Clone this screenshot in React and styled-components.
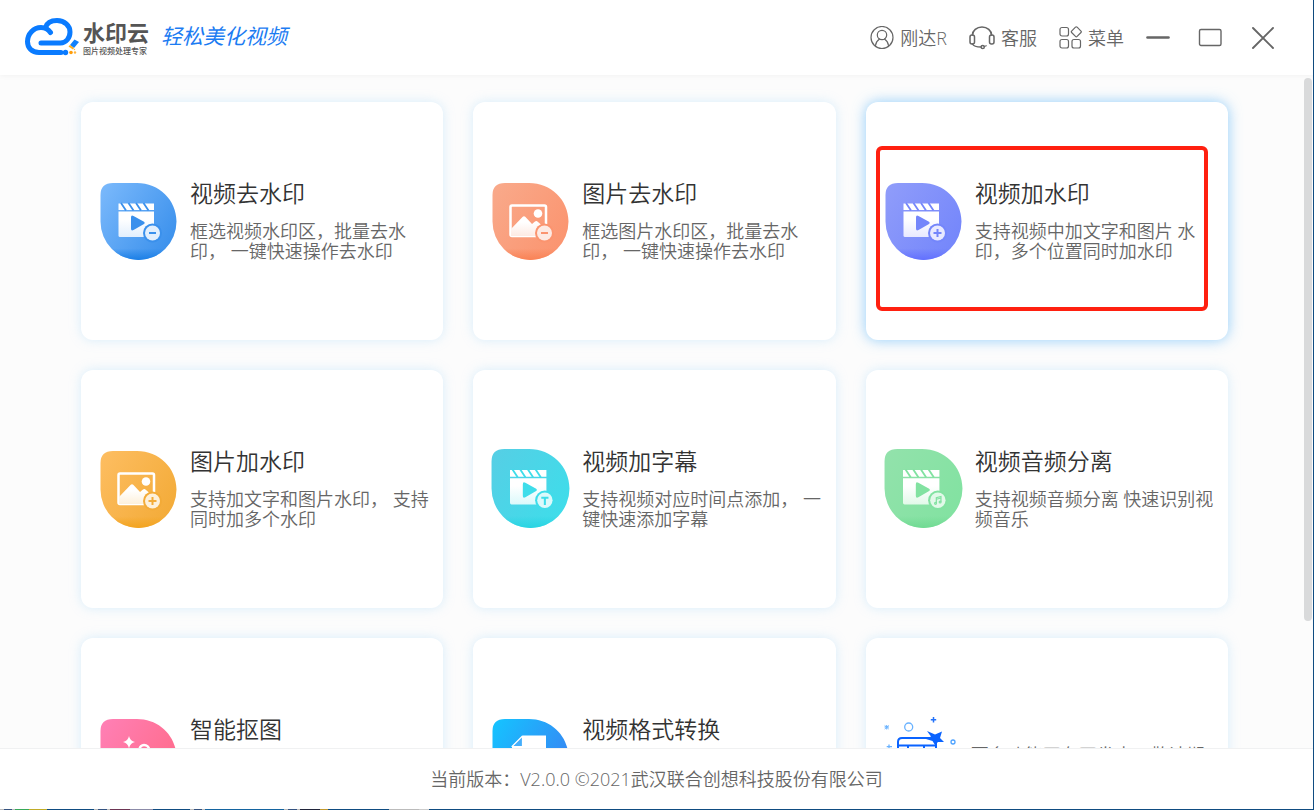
import React from 'react';
import styled, { createGlobalStyle, css } from 'styled-components';

const GlobalStyle = createGlobalStyle`
  *, *::before, *::after { box-sizing: border-box; }
  body {
    margin: 0;
    background: #fff;
    color: #666;
    font-family: "Open Sans", "Noto Sans CJK SC", sans-serif;
    font-weight: 350;
    font-size: 18px;
  }
`;

const Shell = styled.div`
  display: flex;
  flex-direction: column;
  height: 100vh;
  border-right: 1px solid #0f4c81;
`;

const Header = styled.header`
  position: relative;
  z-index: 1;
  flex: none;
  display: flex;
  align-items: center;
  justify-content: space-between;
  height: 75px;
  padding: 0 39px 0 24px;
  background: #fff;
  box-shadow: 0 0 6px rgba(0, 0, 0, 0.06);
`;

const Brand = styled.a`
  display: flex;
  align-items: center;
  color: #555;
  text-decoration: none;
  white-space: nowrap;
`;

const BrandNames = styled.span`
  display: flex;
  flex-direction: column;
  margin: 0 12px 0 4px;
`;

const BrandName = styled.span`
  font-size: 22px;
  line-height: 26px;
  font-weight: 700;
`;

const BrandSub = styled.span`
  font-size: 8px;
  line-height: 12px;
  font-weight: 500;
`;

const Slogan = styled.span`
  color: #1c7cf2;
  font-size: 21px;
  line-height: 34px;
  font-style: italic;
  font-weight: 400;
  padding-bottom: 4px;
`;

const Actions = styled.nav`
  display: flex;
  align-items: center;
  gap: 22px;
`;

const PlainButton = styled.button`
  display: flex;
  align-items: center;
  gap: 6px;
  padding: 0;
  border: 0;
  background: none;
  color: inherit;
  font: inherit;
  line-height: 24px;
  white-space: nowrap;
  cursor: pointer;
  svg { flex: none; display: block; }
`;

const WindowControls = styled.div`
  display: flex;
  gap: 28px;
`;

const Body = styled.div`
  flex: 1;
  min-height: 0;
  display: flex;
  background: #fcfcfc;
`;

const Main = styled.main`
  flex: 1;
  min-width: 0;
  overflow-y: auto;
  scrollbar-width: none;
`;

const Grid = styled.div`
  display: grid;
  grid-template-columns: repeat(3, minmax(0, 1fr));
  grid-auto-rows: 238px;
  gap: 30px;
  padding: 27px 76px 30px 81px;
`;

const Track = styled.div`
  flex: none;
  width: 9px;
  padding: 3px 1px 0 0;
`;

const Thumb = styled.div`
  height: 81%;
  border-radius: 4px;
  background: #d9dadb;
`;

const Card = styled.a`
  position: relative;
  display: flex;
  align-items: center;
  gap: ${(p) => (p.$plain ? '7px' : '12px')};
  padding-left: ${(p) => (p.$plain ? '18px' : '17px')};
  border-radius: 12px;
  background: #fff;
  color: inherit;
  text-decoration: none;
  box-shadow: 0 0 12px rgba(150, 208, 250, 0.35);
  ${(p) => p.$active && css`box-shadow: 0 0 14px rgba(100, 185, 250, 0.7);`}
`;

const CardText = styled.div`
  display: flex;
  flex-direction: column;
  gap: 13px;
  padding-bottom: 3px;
  white-space: pre;
`;

const Title = styled.h2`
  margin: 0;
  color: #333;
  font-size: 23px;
  line-height: 30px;
  font-weight: inherit;
`;

const Description = styled.p`
  margin: 0;
  min-height: 40px;
  font-size: 18px;
  line-height: 20px;
`;

const Notice = styled(Description)`
  padding-top: 18px;
`;

const Highlight = styled.span`
  position: absolute;
  inset: 44px 20px 29px 10px;
  border: 4px solid #ff2010;
  border-radius: 6px;
  pointer-events: none;
`;

const Footer = styled.footer`
  flex: none;
  display: flex;
  align-items: center;
  justify-content: center;
  height: 61px;
  padding-bottom: 2px;
  border-top: 1px solid #f0f1f2;
  background: #fff;
`;

const BottomEdge = styled.div`
  flex: none;
  height: 1px;
  background: linear-gradient(
    90deg,
    #bbb 0 4px, #345280 4px 12px, #bbb 12px 15px, #38a858 15px 29px, #c0ac28 29px 47px,
    #0f4c81 47px 94px, #bbb 94px 98px, #345280 98px 107px, #bbb 107px 110px, #6d3554 110px 130px,
    #8c8ba8 130px 153px, #0f4c81 153px 190px, #bbb 190px 194px, #345280 194px 202px, #bbb 202px 205px,
    #1464a0 205px 284px, #bbb 284px 288px, #345280 288px 297px, #bbb 297px 300px, #20243a 300px 320px,
    #c09830 320px 328px, #0f4c81 328px 389px, #bbb 389px 419px, #ccc 419px 429px, #0f4c81 429px
  );
`;

const CloudLogo = () => (
  <svg width="55" height="40" viewBox="-1 2 55 40" fill="none" aria-hidden="true">
    <path d="M36 36.500H14C6.500 36.500 2.500 31.500 2.500 25.500C2.500 18 8.500 11.500 16 11.500C20.500 11.500 23.500 13.500 25.500 16.500" stroke="#0a7bff" strokeWidth="5" strokeLinecap="round" />
    <path d="M20.500 11.500C22 6.500 27 4.500 32 4.500C39.500 4.500 45 9.500 45 16C45 22 41 27 35.500 27H16" stroke="#0a7bff" strokeWidth="5" strokeLinecap="round" strokeLinejoin="round" />
    <circle cx="40.500" cy="36.500" r="2.700" fill="#0a7bff" />
    <path d="M49.500 23.500L54 26L49 32L45 29Z" fill="#1180fb" />
    <path d="M45 29L49 32L48 33.500L43.500 30.500Z" fill="#ffae1a" />
    <circle cx="46" cy="36.500" r="1.800" fill="#ff9d0a" />
    <circle cx="50" cy="36.500" r="1.200" fill="#ffb53d" />
    <circle cx="49.500" cy="33.500" r="0.700" fill="#ffb53d" />
  </svg>
);

const LineIcon = ({ children, width = 24 }) => (
  <svg width={width} height="24" viewBox={`0 0 ${width} 24`} fill="none" stroke="#666" strokeWidth="1.200" strokeLinecap="round" strokeLinejoin="round" aria-hidden="true">
    {children}
  </svg>
);

const UserIcon = () => (
  <LineIcon>
    <circle cx="12" cy="11.500" r="11" />
    <circle cx="12" cy="9" r="4.700" />
    <path d="M5.500 19.500C5.800 16.500 7.300 14.500 9.500 13M14.500 13C16.700 14.500 18.200 16.500 18.500 19.500" />
  </LineIcon>
);

const HeadsetIcon = () => (
  <LineIcon width={26}>
    <path d="M3.500 9C3.500 4.500 7.700 1 13 1S22.500 4.500 22.500 9" strokeWidth="1.700" />
    <rect x="1" y="9" width="4.500" height="9" rx="2" strokeWidth="1.500" />
    <rect x="20.500" y="9" width="4.500" height="9" rx="2" strokeWidth="1.500" />
    <path d="M3.500 18C4.500 20 8 21 12 21" strokeWidth="1.500" />
    <circle cx="13.700" cy="21" r="1.600" strokeWidth="1.500" />
    <path d="M15.300 20.500L17.300 19.800" />
  </LineIcon>
);

const MenuIcon = () => (
  <LineIcon width={23}>
    <rect x="1" y="1.500" width="8.500" height="8.500" rx="2" />
    <rect x="1" y="13.500" width="8.500" height="8.500" rx="2" />
    <rect x="13" y="13.500" width="8.500" height="8.500" rx="2" />
    <path d="M16.500 1.200Q17.300 0.400 18.100 1.200L22 5.100Q22.700 5.800 22 6.500L18.100 10.400Q17.300 11.200 16.500 10.400L12.600 6.500Q11.900 5.800 12.600 5.100Z" />
  </LineIcon>
);

const tones = {
  blue: ['#79b8fb', '#3a90ec', '#1b7fe6', '#e2effd'],
  orange: ['#f9a98a', '#fb946f', '#f98255', '#fdeae3'],
  violet: ['#8f9cfa', '#7486fb', '#6270ff', '#e8e9ff'],
  amber: ['#fdbd60', '#f3ab38', '#f3a41f', '#fdf0da'],
  cyan: ['#55cfe5', '#3eddea', '#28d4e2', '#dbf9fb'],
  green: ['#92e2ab', '#82e2a1', '#70da92', '#e2f9e9'],
  pink: ['#ff7fb4', '#ff6a88', '#ff6a88', '#fff'],
  azure: ['#16c2ff', '#3a80f2', '#3a80f2', '#fff'],
};

const marks = {
  minus: <path d="M51 52H58" />,
  plus: <path d="M50.500 52H58.500M54.500 48V56" />,
  title: <path d="M51 49.500H58M54.500 49.500V56.500" />,
  music: (
    <g strokeWidth="1.200">
      <path d="M53 55V49.500L57.500 48.300V53.500M53 51L57.500 49.800" />
      <circle cx="52.200" cy="55" r="0.900" />
      <circle cx="56.700" cy="53.700" r="0.900" />
    </g>
  ),
};

const Clapper = ({ id, color }) => (
  <g>
    <path d="M20.500 22.500H56V29H20.500Z" fill="#fff" />
    <path d="M23 22L28 29.500M30.500 22L35.500 29.500M38 22L43 29.500M45.500 22L50.500 29.500" stroke={color} strokeWidth="1.800" />
    <path d="M20.500 30.500H56V56H22Q20.500 56 20.500 54.500Z" fill={`url(#${id}-glyph)`} />
    <path d="M33 36.500Q33 33.500 35.500 35L46 40.800Q47.700 42 46 43L35.500 49Q33 50.300 33 47.500Z" fill={color} />
  </g>
);

const Photo = ({ id }) => (
  <g>
    <rect x="20.500" y="24.500" width="35.500" height="30.500" rx="1.500" fill="none" stroke="#fff" strokeWidth="2.500" />
    <circle cx="48" cy="32.500" r="4.300" fill="#fff" />
    <path d="M21 48L32.500 36Q34 34.500 35.500 36L42 43L45 40.500Q46.500 39.500 48 41L55 47V55H21Z" fill={`url(#${id}-glyph)`} />
  </g>
);

const Cutout = () => (
  <g>
    <path d="M31 19Q32 24 37 25Q32 26 31 31.500Q30 26 25 25Q30 24 31 19Z" fill="#fff" />
    <path d="M41.500 33C41.500 29.500 44 28 46 28C49 28 51 30 51 32.500C51 37 44 42 37 54" fill="none" stroke="#fff" strokeWidth="2.500" />
  </g>
);

const Convert = () => (
  <g>
    <path d="M33 18.500H56V56H22V30H33Z" fill="#fff" />
    <path d="M32.500 19L22 29.500H32.500Z" fill="#45aefb" stroke="#fff" strokeWidth="1.200" strokeLinejoin="round" />
  </g>
);

const glyphs = { clapper: Clapper, photo: Photo, cutout: Cutout, convert: Convert };

const FeatureIcon = ({ id, tone, glyph, mark, large }) => {
  const [from, to, edge, fade] = tones[tone];
  const Glyph = glyphs[glyph];
  return (
    <svg width="80" height="80" viewBox={large ? '1 2 78 78' : '0 0 80 80'} aria-hidden="true">
      <defs>
        <linearGradient id={`${id}-base`} x1="0" y1="0.100" x2="1" y2="0.750">
          <stop offset="0" stopColor={from} />
          <stop offset="1" stopColor={to} />
        </linearGradient>
        <linearGradient id={`${id}-edge`} x1="0" y1="0" x2="0" y2="1">
          <stop offset="0.850" stopColor={edge} stopOpacity="0" />
          <stop offset="1" stopColor={edge} />
        </linearGradient>
        <linearGradient id={`${id}-glyph`} x1="0" y1="0" x2="0" y2="1">
          <stop offset="0.300" stopColor="#fff" />
          <stop offset="1" stopColor={fade} />
        </linearGradient>
      </defs>
      <path d="M15 2H39C61 2 78.500 19 78.500 40.500A38 38.500 0 0 1 40.500 79A38 38.500 0 0 1 2.500 40.500V14Q2.500 2 15 2Z" fill={`url(#${id}-base)`} />
      <path d="M15 2H39C61 2 78.500 19 78.500 40.500A38 38.500 0 0 1 40.500 79A38 38.500 0 0 1 2.500 40.500V14Q2.500 2 15 2Z" fill={`url(#${id}-edge)`} />
      <Glyph id={id} color={to} />
      {mark && (
        <g>
          <circle cx="54.500" cy="52" r="9.500" fill={to} />
          <circle cx="54.500" cy="52" r="7.500" fill={fade} />
          <g fill="none" stroke={to} strokeWidth="2">{marks[mark]}</g>
        </g>
      )}
    </svg>
  );
};

const ComingIcon = () => (
  <svg width="80" height="80" viewBox="0 0 80 80" fill="none" aria-hidden="true">
    <path d="M0.700 8.500L4.700 12M4.700 8.500L0.700 12M2.700 8V12.500M0.500 10H5" stroke="#69b2ff" />
    <circle cx="24.700" cy="10" r="4" stroke="#69b2ff" strokeWidth="1.300" />
    <path d="M49.500 0V5.500M46.800 2.700H52.200" stroke="#2272fa" strokeWidth="1.500" />
    <circle cx="69" cy="25" r="2" stroke="#4da2ff" strokeWidth="1.300" />
    <path d="M5 27.500V32M2.700 29.700H8" stroke="#69b2ff" strokeWidth="1.300" />
    <path d="M14 64V25Q14 21 18 21H48Q52 21 52 25V64ZM14 28.500H52M24 28.500V38M40 28.500V38" stroke="#0a63ff" strokeWidth="2" />
    <path d="M43 14L51 17.500L58 14.500L56 21L60 25L54 25L51 28L48.500 24L42 22L47 19.500Z" fill="#0a63ff" />
  </svg>
);

const features = [
  { id: 'video-remove', tone: 'blue', glyph: 'clapper', mark: 'minus', title: '视频去水印', text: '框选视频水印区，批量去水\n印， 一键快速操作去水印' },
  { id: 'photo-remove', tone: 'orange', glyph: 'photo', mark: 'minus', title: '图片去水印', text: '框选图片水印区，批量去水\n印， 一键快速操作去水印' },
  { id: 'video-add', tone: 'violet', glyph: 'clapper', mark: 'plus', title: '视频加水印', text: '支持视频中加文字和图片 水\n印，多个位置同时加水印', active: true },
  { id: 'photo-add', tone: 'amber', glyph: 'photo', mark: 'plus', title: '图片加水印', text: '支持加文字和图片水印， 支持\n同时加多个水印' },
  { id: 'subtitle', tone: 'cyan', glyph: 'clapper', mark: 'title', title: '视频加字幕', text: '支持视频对应时间点添加， 一\n键快速添加字幕', large: true },
  { id: 'audio-split', tone: 'green', glyph: 'clapper', mark: 'music', title: '视频音频分离', text: '支持视频音频分离 快速识别视\n频音乐', large: true },
  { id: 'cutout', tone: 'pink', glyph: 'cutout', title: '智能抠图' },
  { id: 'convert', tone: 'azure', glyph: 'convert', title: '视频格式转换' },
];

export default function App() {
  return (
    <>
      <GlobalStyle />
      <Shell>
        <Header>
          <Brand href="#home">
            <CloudLogo />
            <BrandNames>
              <BrandName>水印云</BrandName>
              <BrandSub>图片视频处理专家</BrandSub>
            </BrandNames>
            <Slogan>轻松美化视频</Slogan>
          </Brand>
          <Actions>
            <PlainButton type="button"><UserIcon />刚达R</PlainButton>
            <PlainButton type="button"><HeadsetIcon />客服</PlainButton>
            <PlainButton type="button"><MenuIcon />菜单</PlainButton>
            <WindowControls>
              <PlainButton type="button" aria-label="最小化">
                <LineIcon><path d="M1.500 11.500H22.500" strokeWidth="2.600" /></LineIcon>
              </PlainButton>
              <PlainButton type="button" aria-label="最大化">
                <LineIcon><rect x="1.500" y="3.500" width="21.500" height="16" rx="1.500" strokeWidth="1.400" /></LineIcon>
              </PlainButton>
              <PlainButton type="button" aria-label="关闭">
                <LineIcon><path d="M3 2L23 22M23 2L3 22" strokeWidth="1.900" /></LineIcon>
              </PlainButton>
            </WindowControls>
          </Actions>
        </Header>
        <Body>
          <Main>
            <Grid>
              {features.map((f) => (
                <Card key={f.id} href={`#${f.id}`} $active={f.active}>
                  <FeatureIcon id={f.id} tone={f.tone} glyph={f.glyph} mark={f.mark} large={f.large} />
                  <CardText>
                    <Title>{f.title}</Title>
                    <Description>{f.text}</Description>
                  </CardText>
                  {f.active && <Highlight />}
                </Card>
              ))}
              <Card href="#more" $plain>
                <ComingIcon />
                <CardText>
                  <Notice>{'更多功能正在开发中，敬请期\n待'}</Notice>
                </CardText>
              </Card>
            </Grid>
          </Main>
          <Track><Thumb /></Track>
        </Body>
        <Footer>当前版本：V2.0.0 ©2021武汉联合创想科技股份有限公司</Footer>
        <BottomEdge />
      </Shell>
    </>
  );
}
